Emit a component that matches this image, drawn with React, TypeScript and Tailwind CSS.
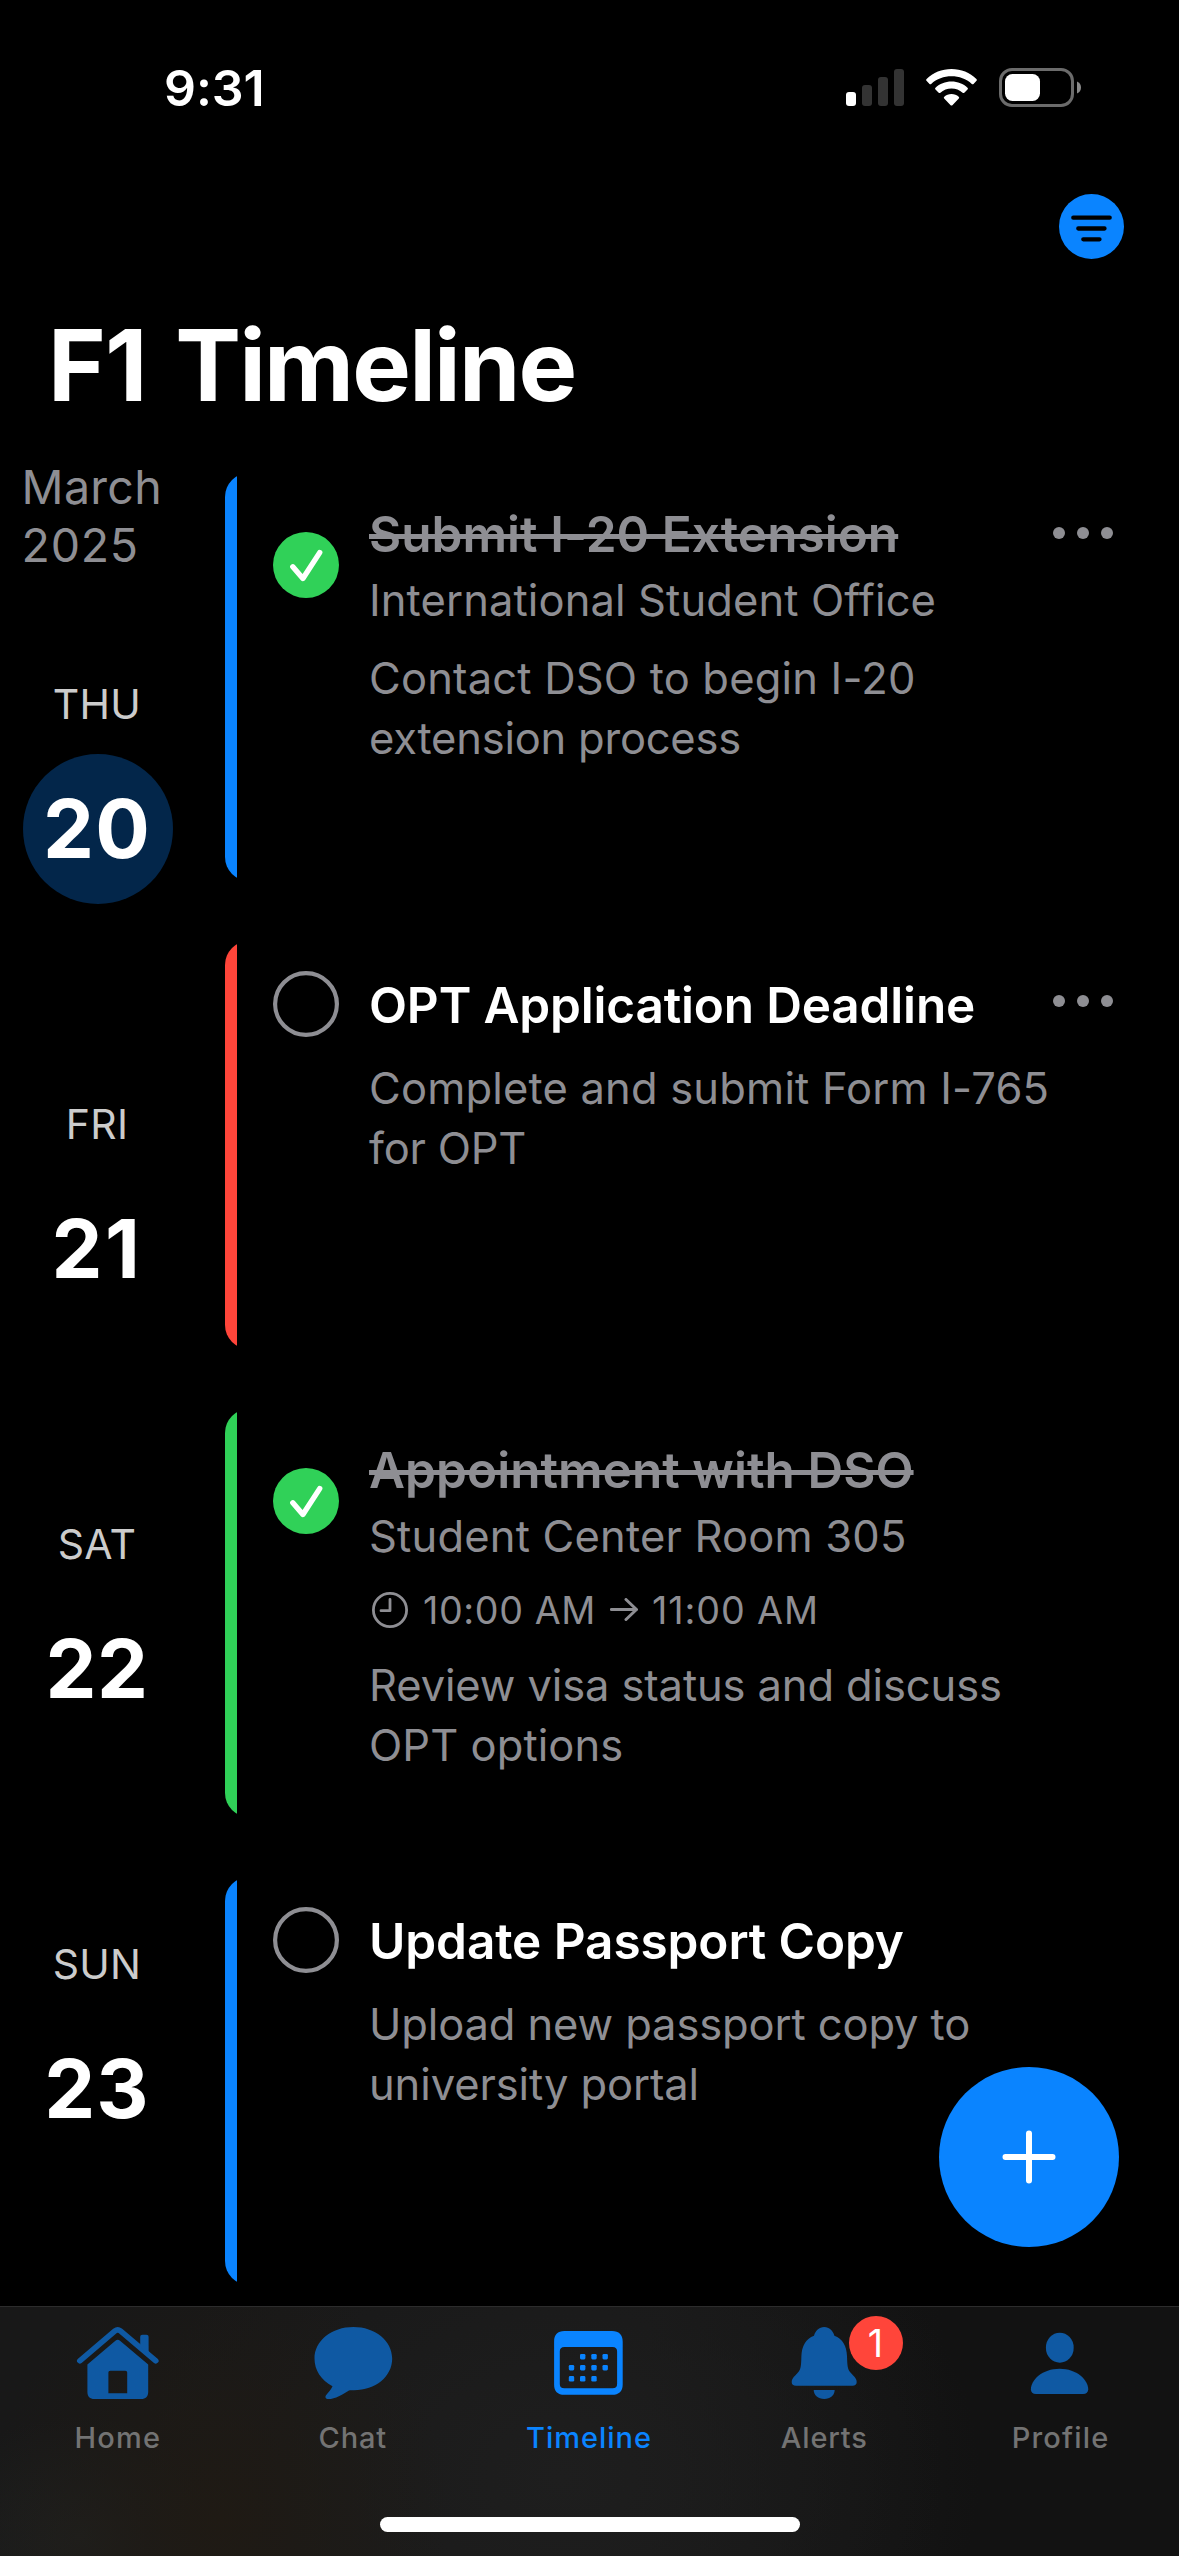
import React from 'react';

type Line = { text: string; tracking: string };

type TimelineEvent = {
  title: Line;
  done: boolean;
  accent: string;
  location?: Line;
  time?: { start: string; end: string };
  description: Line[];
  menu: boolean;
};

const days = [
  { label: 'THU', num: '20', today: true, tracking: 'tracking-[1.3px]' },
  { label: 'FRI', num: '21', today: false, tracking: 'tracking-[2.5px]' },
  { label: 'SAT', num: '22', today: false, tracking: 'tracking-[0.6px]' },
  { label: 'SUN', num: '23', today: false, tracking: 'tracking-[1px]' },
];

const events: TimelineEvent[] = [
  {
    title: { text: 'Submit I-20 Extension', tracking: 'tracking-[0.04px]' },
    done: true,
    accent: 'bg-[#0a84ff]',
    location: { text: 'International Student Office', tracking: 'tracking-[0.11px]' },
    description: [
      { text: 'Contact DSO to begin I-20', tracking: 'tracking-[0.18px]' },
      { text: 'extension process', tracking: 'tracking-[-0.23px]' },
    ],
    menu: true,
  },
  {
    title: { text: 'OPT Application Deadline', tracking: 'tracking-[-0.17px]' },
    done: false,
    accent: 'bg-[#ff453a]',
    description: [
      { text: 'Complete and submit Form I-765', tracking: 'tracking-[0.18px]' },
      { text: 'for OPT', tracking: 'tracking-[-0.2px]' },
    ],
    menu: true,
  },
  {
    title: { text: 'Appointment with DSO', tracking: 'tracking-[0.05px]' },
    done: true,
    accent: 'bg-[#30d158]',
    location: { text: 'Student Center Room 305', tracking: 'tracking-[0.19px]' },
    time: { start: '10:00 AM', end: '11:00 AM' },
    description: [
      { text: 'Review visa status and discuss', tracking: 'tracking-[-0.12px]' },
      { text: 'OPT options', tracking: 'tracking-[0.05px]' },
    ],
    menu: false,
  },
  {
    title: { text: 'Update Passport Copy', tracking: 'tracking-[-0.1px]' },
    done: false,
    accent: 'bg-[#0a84ff]',
    description: [
      { text: 'Upload new passport copy to', tracking: 'tracking-[-0.12px]' },
      { text: 'university portal', tracking: 'tracking-[-0.1px]' },
    ],
    menu: false,
  },
];

function StatusBar() {
  return (
    <div className="flex h-[177px] items-start justify-between pl-[164px] pr-[98px]">
      <span className="mt-[58px] text-[50px] leading-[60px] font-semibold tracking-[-0.1px]">9:31</span>
      <div className="mt-[68px] flex gap-[22px]">
        <svg width="58" height="39" viewBox="0 0 58 39">
          <rect x="0" y="24" width="10" height="14" rx="3" fill="#fff" />
          <rect x="16" y="17" width="10" height="21" rx="3" fill="#333" />
          <rect x="32" y="9" width="10" height="29" rx="3" fill="#333" />
          <rect x="48" y="1" width="10" height="37" rx="3" fill="#333" />
        </svg>
        <svg width="51" height="39" viewBox="0 0 51 39" fill="#fff">
          <path d="M25.5 1C35 1 44 4.600 50.400 10.900c.6.6.6 1.300.1 1.900l-3 3.100c-.5.500-1.200.5-1.700 0C40.300 10.800 33.100 8.300 25.500 8.300S10.700 10.800 5.200 15.900c-.5.500-1.200.5-1.700 0l-3-3.100c-.5-.6-.5-1.300.1-1.900C7 4.600 16 1 25.500 1Z" />
          <path d="M25.500 13.500c6.200 0 11.900 2.300 16 6.200.6.600.6 1.200 0 1.800l-3.200 3.200c-.5.500-1.100.5-1.700.1-3-2.700-6.900-4.200-11.100-4.200s-8.100 1.500-11.100 4.200c-.6.400-1.200.4-1.700-.1l-3.200-3.200c-.6-.6-.6-1.200 0-1.800 4.100-3.900 9.800-6.200 16-6.200Z" />
          <path d="M25.500 26c2.800 0 5.300 1 7.200 2.700.6.500.6 1.200.1 1.700l-6.400 6.800c-.5.500-1.300.5-1.800 0l-6.400-6.800c-.5-.5-.5-1.200.1-1.700C20.200 27 22.700 26 25.500 26Z" />
        </svg>
        <svg width="82" height="39" viewBox="0 0 82 39">
          <rect x="1.500" y="1.500" width="72" height="36" rx="11.500" fill="none" stroke="#6b6b6b" strokeWidth="3" />
          <rect x="6" y="6" width="35" height="27" rx="7.500" fill="#fff" />
          <path d="M78 13.500c2.500 1 4 3.300 4 6s-1.500 5-4 6Z" fill="#8a8a8a" />
        </svg>
      </div>
    </div>
  );
}

function Header() {
  return (
    <header>
      <div className="flex h-[128px] justify-end pt-[17px] pr-[55px]">
        <button className="size-[65px]">
          <svg width="65" height="65" viewBox="0 0 65 65">
            <circle cx="32.500" cy="32.500" r="32.500" fill="#0a84ff" />
            <path d="M14.300 23.700H50.700M19.300 34.500H45.500M24.300 45.300H40.500" stroke="#000" strokeWidth="4.300" strokeLinecap="round" />
          </svg>
        </button>
      </div>
      <h1 className="pl-[48px] text-[98.6px] leading-[120px] font-bold tracking-[-1.8px] [word-spacing:7px]">
        <span className="tracking-[-0.9px]">F1</span> Timeline
      </h1>
    </header>
  );
}

function DayColumn() {
  return (
    <aside className="w-[225px] shrink-0 pt-[33px]">
      <p className="h-[221px] pl-[21.6px] text-[46.5px] leading-[58px] text-[#8e8e93]">
        <span className="block tracking-[0.3px]">March</span>
        <span className="block tracking-[0.7px]">2025</span>
      </p>
      <div className="ml-[23px] flex w-[150px] flex-col gap-[195px]">
        {days.map((d) => (
          <div key={d.label} className="flex flex-col items-center gap-[25px]">
            <span className="pr-[2px] text-[41px] leading-[50px] tracking-[0.3px] text-[#cccccc]">{d.label}</span>
            <span
              className={`flex size-[150px] items-center justify-center rounded-full pb-[1px] pr-[2px] text-[81px] leading-[98px] font-bold ${d.tracking} ${d.today ? 'bg-[#03264a]' : ''}`}
            >
              {d.num}
            </span>
          </div>
        ))}
      </div>
    </aside>
  );
}

function Status({ done }: { done: boolean }) {
  return done ? (
    <svg className="mt-[59px] shrink-0" width="66" height="66" viewBox="0 0 66 66">
      <circle cx="33" cy="33" r="33" fill="#30d158" />
      <path d="M19.800 34.800 29.900 46.500 46.700 20.600" fill="none" stroke="#fff" strokeWidth="5.400" strokeLinecap="round" strokeLinejoin="round" />
    </svg>
  ) : (
    <svg className="mt-[30px] shrink-0" width="66" height="66" viewBox="0 0 66 66">
      <circle cx="33" cy="33" r="30.900" fill="none" stroke="#8e8e93" strokeWidth="4.200" />
    </svg>
  );
}

function EventCard({ event }: { event: TimelineEvent }) {
  return (
    <article className="flex h-[408px] overflow-hidden rounded-[24px]">
      <div className={`w-[12px] shrink-0 ${event.accent}`} />
      <div className="flex flex-1 pl-[36px] pr-[66px]">
        <Status done={event.done} />
        <div className={`ml-[30px] flex-1 whitespace-nowrap ${event.done ? 'pt-[31px]' : 'pt-[34px]'}`}>
          <h2
            className={`text-[49.5px] leading-[60px] font-semibold ${event.title.tracking} ${event.done ? 'text-[#8e8e93] line-through decoration-[5px]' : 'text-white'}`}
          >
            {event.title.text}
          </h2>
          {event.location && (
            <p className={`mt-[6px] text-[43.5px] leading-[60px] text-[#8e8e93] ${event.location.tracking}`}>
              {event.location.text}
            </p>
          )}
          {event.time && (
            <div className="mt-[20px] flex h-[48px] items-center pl-[3px] text-[37.7px] leading-[48px] tracking-[0.6px] text-[#8e8e93]">
              <svg className="mr-[15px]" width="36" height="36" viewBox="0 0 36 36" fill="none" stroke="currentColor" strokeWidth="2.800" strokeLinecap="round" strokeLinejoin="round">
                <circle cx="18" cy="18" r="16.600" />
                <path d="M18 7.500V18.700H9" />
              </svg>
              <span className="w-[187px]">{event.time.start}</span>
              <svg className="mr-[14px]" width="28" height="24" viewBox="0 0 28 24" fill="none" stroke="currentColor" strokeWidth="3" strokeLinecap="round" strokeLinejoin="round">
                <path d="M1.400 11.500H26.500M16 1.500 26.500 11.500 16 21.500" />
              </svg>
              <span className="tracking-[0.9px]">{event.time.end}</span>
            </div>
          )}
          <p
            className={`text-[43.5px] leading-[60px] text-[#8e8e93] ${event.time ? 'mt-[21px]' : event.location ? 'mt-[18px]' : 'mt-[23px]'}`}
          >
            {event.description.map((line) => (
              <span key={line.text} className={`block ${line.tracking}`}>
                {line.text}
              </span>
            ))}
          </p>
        </div>
        {event.menu && (
          <svg className="mt-[54px] -ml-[60px] shrink-0" width="60" height="12" viewBox="0 0 60 12" fill="#8e8e93">
            <circle cx="6" cy="6" r="6" />
            <circle cx="30" cy="6" r="6" />
            <circle cx="54" cy="6" r="6" />
          </svg>
        )}
      </div>
    </article>
  );
}

function HomeIcon() {
  return (
    <svg width="90" height="80" viewBox="-45 0 90 80" fill="currentColor">
      <path d="M-38.200 40.800-3 10.900C-1.200 9.400.6 9.400 2.400 10.900L37.800 40.800" fill="none" stroke="currentColor" strokeWidth="5.600" strokeLinecap="round" strokeLinejoin="round" />
      <path d="M22.200 26V17c0-1.600.8-2.300 2.300-2.300h3.800c1.500 0 2.300.7 2.300 2.300v18.500Z" />
      <path fillRule="evenodd" d="M-2.600 20.700C-1.100 19.400.5 19.400 2 20.700L30.200 44.500V72c0 4.500-2.500 7-7 7H-23.600c-4.500 0-7-2.500-7-7V44.500ZM-7.600 50.700c-1.300 0-2 .7-2 2V73.300H9.200V52.700c0-1.300-.7-2-2-2Z" />
    </svg>
  );
}

function ChatIcon() {
  return (
    <svg width="90" height="80" viewBox="-45 0 90 80" fill="currentColor">
      <path d="M-.6 7C21 7 38.200 20.500 38.200 38.600S21.500 70.300 0 70.300c-2 0-3.600-.1-5 .1C-11.500 74.500-18.500 79-25.800 79c-2.600 0-3.600-2-2-4.100C-25.300 72-22.800 69.500-21.500 66.300-33 60-39.500 50.500-39.500 38.600-39.500 20.500-22.200 7-.6 7Z" />
    </svg>
  );
}

function CalendarIcon() {
  const dots = [
    [-6.8, 36.7], [4.500, 36.7], [15.700, 36.7],
    [-18, 47.7], [-6.8, 47.7], [4.500, 47.7], [15.700, 47.7],
    [-18, 58.8], [-6.8, 58.8], [4.500, 58.8],
  ];
  return (
    <svg width="90" height="80" viewBox="-45.500 0 90 80" fill="currentColor">
      <path fillRule="evenodd" d="M-25 11H22.500C29.500 11 33.200 14.700 33.200 21.500V64.500C33.200 71.300 29.500 74.800 22.500 74.800H-25C-32 74.800-35.400 71.300-35.400 64.500V21.500C-35.400 14.700-32 11-25 11ZM-25 27C-28.300 27-29.700 28.500-29.700 31.500V64C-29.700 67-28.300 68.300-25 68.300H23C26.200 68.300 27.600 67 27.600 64V31.500C27.600 28.500 26.200 27 23 27Z" />
      {dots.map(([x, y]) => (
        <rect key={`${x},${y}`} x={x - 2.700} y={y - 2.700} width="5.400" height="5.400" rx="1.300" />
      ))}
    </svg>
  );
}

function BellIcon() {
  return (
    <svg width="90" height="80" viewBox="-45 0 90 80" fill="currentColor">
      <path d="M-11 15.700C-9.500 10.500-6 7-.8 7 4.400 7 7.900 10.500 9.400 15.700 17.500 18.500 21.700 26 22 36 22.300 45 22.500 49 25 52 28 55.500 31.700 58 31.700 62 31.700 64.500 30 65.700 27.500 65.700H-29C-31.800 65.700-33.300 64.500-33.300 62-33.300 58-29.500 55.500-26.600 52-24 49-23.900 45-23.600 36-23.300 26-19 18.500-11 15.700Z" />
      <path d="M-11.300 70H9.700C9.500 75.300 5.300 79-.8 79S-11.100 75.300-11.300 70Z" />
    </svg>
  );
}

function ProfileIcon() {
  return (
    <svg width="90" height="80" viewBox="-45 0 90 80" fill="currentColor">
      <ellipse cx="-1.200" cy="27.700" rx="13.900" ry="15" />
      <path d="M-1.400 48.700C16 48.700 27.200 60 27.200 69.300 27.200 72.500 25.300 74 22 74H-25C-28.300 74-30.100 72.500-30.100 69.300-30.100 60-18.800 48.700-1.400 48.700Z" />
    </svg>
  );
}

const tabs = [
  { label: 'Home', Icon: HomeIcon, active: false, badge: 0, tracking: 'tracking-[1.2px]' },
  { label: 'Chat', Icon: ChatIcon, active: false, badge: 0, tracking: 'tracking-[0.8px] pr-[2px]' },
  { label: 'Timeline', Icon: CalendarIcon, active: true, badge: 0, tracking: 'tracking-[0.99px] pr-[1px]' },
  { label: 'Alerts', Icon: BellIcon, active: false, badge: 1, tracking: 'tracking-[0.85px] pr-[2px]' },
  { label: 'Profile', Icon: ProfileIcon, active: false, badge: 0, tracking: 'tracking-[1.15px] pr-[1px]' },
];

function TabBar() {
  return (
    <nav className="flex h-[250px] flex-col border-t border-[#2c2c2c] bg-[#171717] bg-[radial-gradient(ellipse_230px_260px_at_220px_210px,#1f1a14,transparent),radial-gradient(ellipse_160px_120px_at_80px_230px,#1f201f,transparent),radial-gradient(ellipse_420px_330px_at_560px_170px,#1e1e1e,transparent),linear-gradient(90deg,#181818_0%,#181818_55%,#121212_80%,#121212_100%)]">
      <div className="grid grid-cols-5">
        {tabs.map(({ label, Icon, active, badge, tracking }) => (
          <div key={label} className={`relative flex flex-col items-center pt-[13px] ${active ? 'text-[#0a84ff]' : 'text-[#0f59a3]'}`}>
            <Icon />
            <span className={`mt-[20px] text-[29px] leading-[36px] font-medium ${tracking} ${active ? '' : 'text-[#737373]'}`}>{label}</span>
            {badge > 0 && (
              <span className="absolute top-[9px] left-[142px] flex size-[54px] items-center justify-center rounded-full bg-[#ff453a] pr-[2px] text-[37.7px] leading-[46px] text-white">
                {badge}
              </span>
            )}
          </div>
        ))}
      </div>
      <div className="mt-[61px] h-[15px] w-[420px] self-center rounded-full bg-white" />
    </nav>
  );
}

export default function App() {
  return (
    <div className="relative flex h-[2556px] w-[1179px] flex-col overflow-hidden bg-black font-['Inter',sans-serif] text-white">
      <StatusBar />
      <Header />
      <main className="flex h-[1881px]">
        <DayColumn />
        <section className="flex flex-1 flex-col gap-[60px] pt-[48px]">
          {events.map((e) => (
            <EventCard key={e.title.text} event={e} />
          ))}
        </section>
      </main>
      <TabBar />
      <button className="absolute top-[2067px] left-[939px] flex size-[180px] items-center justify-center rounded-full bg-[#0a84ff]">
        <svg width="54" height="54" viewBox="0 0 54 54" stroke="#fff" strokeWidth="6" strokeLinecap="round">
          <path d="M27 3.500V50.500M3.500 27H50.500" />
        </svg>
      </button>
    </div>
  );
}
